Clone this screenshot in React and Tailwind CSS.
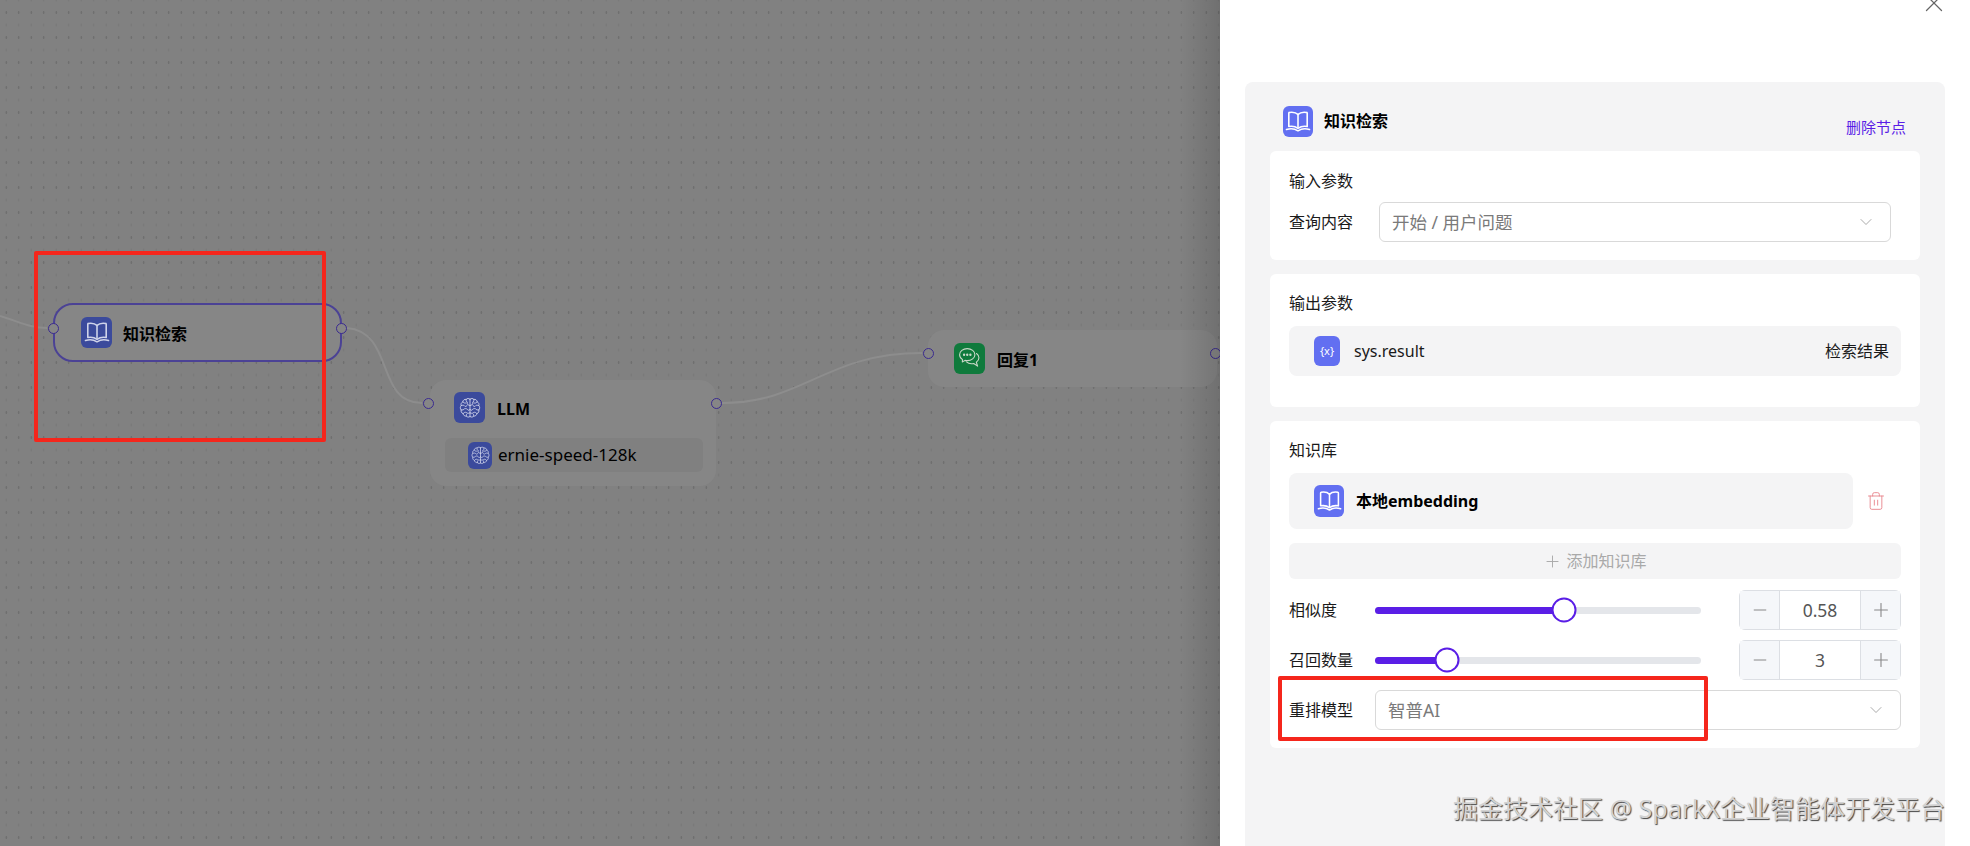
import React from "react";
import { ChevronDown, Minus, Plus, Trash2, X } from "lucide-react";

const BookIcon = ({ className }) => (
  <svg viewBox="0 0 30 30" fill="none" stroke="currentColor" strokeWidth="1.6" strokeLinejoin="round" strokeLinecap="round" className={className}>
    <path d="M15 7.5c-1.500-1.600-3.600-2.300-6.200-2.300-.9 0-1.700 0-2.400.2-.4.1-.6.4-.6.8v13.300c2.900-.5 6.300-.3 9.200 1.800 2.900-2.100 6.300-2.300 9.200-1.800V6.200c0-.4-.2-.7-.6-.8-.7-.2-1.500-.2-2.400-.2-2.600 0-4.700.7-6.200 2.300z" />
    <path d="M15 7.500v12.800" />
    <path d="M3.500 22.500c4-1.200 8.300-.8 11.500 1.300 3.200-2.100 7.500-2.500 11.500-1.300" />
  </svg>
);

const BrainIcon = ({ className }) => (
  <svg viewBox="0 0 24 24" fill="none" stroke="currentColor" strokeWidth="0.9" strokeLinecap="round" strokeLinejoin="round" className={className}>
    <path d="M12 3.200c-1-1-3-1-3.800.2-1.700-.4-3.300.8-3.300 2.500-1.500.5-2.300 2.200-1.700 3.700-1.200 1.100-1.200 3.200 0 4.300-.5 1.600.4 3.200 1.900 3.700.2 1.600 1.700 2.800 3.300 2.500.9 1.200 2.700 1.300 3.600.3 1 1 2.800.9 3.600-.3 1.600.3 3.100-.9 3.300-2.500 1.500-.5 2.400-2.100 1.900-3.700 1.200-1.100 1.200-3.200 0-4.300.6-1.500-.2-3.200-1.700-3.700 0-1.700-1.600-2.900-3.300-2.500-.8-1.200-2.800-1.200-3.800-.2z" />
    <path d="M12 3.200v17.400" />
    <path d="M8.200 3.400c-.5 1.300 0 2.500 1.300 3M4.900 5.900c.8 1.200 2 1.500 3.300 1M12 9.500c-1.500 0-2.500-.7-2.800-2M3.200 9.600c1.500-.8 3-.5 3.800.8 1 .1 1.900-.4 2.300-1.300M3.200 13.900c1.300.4 2.600 0 3.300-1.200 1.500-.4 3 .2 3.500 1.500 1 .2 1.600-.2 2-.9M5.100 17.600c.7-1.200 2-1.700 3.300-1.200M8.400 20.100c-.3-1.300.2-2.400 1.300-3 .8.300 1.600.2 2.300-.3" />
    <path d="M15.800 3.400c.5 1.300 0 2.500-1.300 3M19.100 5.900c-.8 1.200-2 1.500-3.300 1M12 9.500c1.500 0 2.500-.7 2.800-2M20.800 9.600c-1.500-.8-3-.5-3.800.8-1 .1-1.900-.4-2.300-1.300M20.800 13.900c-1.300.4-2.600 0-3.300-1.200-1.500-.4-3 .2-3.500 1.500-1 .2-1.600-.2-2-.9M18.900 17.600c-.7-1.200-2-1.700-3.300-1.200M15.600 20.100c.3-1.300-.2-2.400-1.300-3-.8.300-1.600.2-2.300-.3" />
  </svg>
);

const ChatIcon = ({ className }) => (
  <svg viewBox="0 0 30 30" fill="none" stroke="currentColor" strokeWidth="1.2" strokeLinecap="round" strokeLinejoin="round" className={className}>
    <path d="M12.500 4c-4.700 0-8.500 3-8.500 6.800 0 2.200 1.300 4.100 3.300 5.400l-.3 2.600 3-1.700c.8.200 1.600.3 2.500.3 4.700 0 8.500-3 8.500-6.600S17.200 4 12.500 4z" />
    <path d="M22.800 9.500c1.700 1.200 2.700 2.900 2.700 4.800 0 2-1.100 3.700-2.900 4.900l1.400 4.300-4.300-3c-3 .6-6.200-.1-8-1.800" />
    <circle cx="9" cy="10.800" r=".7" fill="currentColor" />
    <circle cx="12.500" cy="10.800" r=".7" fill="currentColor" />
    <circle cx="16" cy="10.800" r=".7" fill="currentColor" />
  </svg>
);

const Handle = ({ className }) => (
  <div className={"absolute w-[11px] h-[11px] rounded-full border-[1.5px] border-[#3a2a90] bg-[#868686] " + className}></div>
);

const NodeIcon = ({ bg, children, size = "w-[31px] h-[31px]" }) => (
  <div className={"flex items-center justify-center rounded-md shrink-0 " + bg + " " + size}>{children}</div>
);

const Canvas = () => (
  <div className="relative w-[1220px] h-[846px] overflow-hidden shrink-0 bg-[#818181] bg-[radial-gradient(#6a6a6a_0.8px,transparent_1px),radial-gradient(#787878_0.8px,transparent_1px)] bg-size-[12.5px_25px] bg-position-[0_0,0_12.5px]">
    <svg className="absolute inset-0" width="1220" height="846" fill="none" stroke="#8d8d8d" strokeWidth="2">
      <path d="M0 316C20 322 30 328 47 328" />
      <path d="M347 328C395 332 375 403 422 403" />
      <path d="M722 403C805 403 825 353 922 353" />
    </svg>

    {/* 知识检索 */}
    <div className="absolute left-[53px] top-[303px] w-[289px] h-[59px] flex items-center gap-[11px] pl-[26px] rounded-[20px] border-2 border-[#4b4295] bg-[#868686]">
      <NodeIcon bg="bg-[#3b4a9c]"><BookIcon className="w-[30px] h-[30px] text-[#cfd3ea]" /></NodeIcon>
      <span className="text-base font-bold text-black pt-[3px]">知识检索</span>
    </div>
    <Handle className="left-[48px] top-[323px]" />
    <Handle className="left-[336px] top-[323px]" />
    <div className="absolute left-[34px] top-[251px] w-[292px] h-[191px] rounded-[2px] border-4 border-[#f5261c]"></div>

    {/* LLM */}
    <div className="absolute left-[430px] top-[380px] w-[286px] h-[106px] rounded-[16px] bg-[#868686] pl-[15px] pr-[13px] pt-[12px]">
      <div className="flex items-center gap-3 pl-[9px]">
        <NodeIcon bg="bg-[#3b4a9c]"><BrainIcon className="w-[24px] h-[24px] text-[#cfd3ea]" /></NodeIcon>
        <span className="text-base font-bold text-black pt-[3px]">LLM</span>
      </div>
      <div className="mt-[15px] h-[34px] flex items-center gap-[6px] pl-[23px] bg-[#808080] rounded-md">
        <NodeIcon bg="bg-[#3b4a9c]" size="w-[24px] h-[27px]"><BrainIcon className="w-[21px] h-[21px] text-[#cfd3ea]" /></NodeIcon>
        <span className="text-[17px] text-black">ernie-speed-128k</span>
      </div>
    </div>
    <Handle className="left-[423px] top-[398px]" />
    <Handle className="left-[711px] top-[398px]" />

    {/* 回复1 */}
    <div className="absolute left-[928px] top-[330px] w-[289px] h-[57px] flex items-center gap-[12px] pl-[26px] rounded-[16px] bg-[#868686]">
      <NodeIcon bg="bg-[#0f7a3c]"><ChatIcon className="w-[27px] h-[27px] text-[#c9d8c8]" /></NodeIcon>
      <span className="text-base font-bold text-black pt-[3px]">回复1</span>
    </div>
    <Handle className="left-[923px] top-[348px]" />
    <Handle className="left-[1210px] top-[348px]" />

    <div className="absolute right-0 top-0 w-[40px] h-full bg-linear-to-r from-transparent to-[#00000022]"></div>
  </div>
);

const Section = ({ title, className, children }) => (
  <div className={"bg-white rounded-md px-[19px] " + className}>
    <div className="text-base leading-6 text-[#1a1a1a]">{title}</div>
    {children}
  </div>
);

const Select = ({ value, className }) => (
  <div className={"h-[40px] flex items-center justify-between pl-[12px] pr-[14px] border border-[#d9d9d9] rounded-md text-[#7a7a7a] text-[17.5px] " + className}>
    <span>{value}</span>
    <ChevronDown size={20} strokeWidth={1} className="text-[#9a9a9a]" />
  </div>
);

const SliderRow = ({ label, percent, value }) => (
  <div className="flex items-center h-[40px]">
    <span className="w-[86px] text-base text-[#1a1a1a] shrink-0">{label}</span>
    <div className="relative w-[326px] h-[7px] rounded-full bg-[#e4e6ea] shrink-0">
      <div className="h-full rounded-full bg-[#5a1ee6]" style={{ width: percent + "%" }}></div>
      <div
        className="absolute top-1/2 -translate-x-1/2 -translate-y-1/2 w-[25px] h-[25px] rounded-full bg-white border-2 border-[#5a1ee6]"
        style={{ left: percent + "%" }}
      ></div>
    </div>
    <div className="ml-auto w-[162px] h-[40px] flex items-stretch border border-[#dcdfe4] rounded-md text-[#555]">
      <div className="w-[40px] flex items-center justify-center bg-[#f5f7fa] border-r border-[#dcdfe4] text-[#888]">
        <Minus size={20} strokeWidth={1.2} />
      </div>
      <div className="flex-1 flex items-center justify-center text-[17.5px]">{value}</div>
      <div className="w-[40px] flex items-center justify-center bg-[#f5f7fa] border-l border-[#dcdfe4] text-[#888]">
        <Plus size={22} strokeWidth={1.2} />
      </div>
    </div>
  </div>
);

const Panel = () => (
  <div className="relative flex-1 h-[846px] bg-white overflow-hidden pt-[82px] pl-[25px] pr-[25px]">
    <X size={30} strokeWidth={1} className="absolute right-[21px] top-[-12px] text-[#666]" />

    <div className="h-[764px] bg-[#f4f4f5] rounded-t-lg px-[25px]">
      <div className="h-[69px] flex items-start pl-[13px] pr-[14px] pt-[24px]">
        <div className="w-[30px] h-[31px] rounded-md bg-[#626ff1] flex items-center justify-center">
          <BookIcon className="w-[30px] h-[30px] text-white" />
        </div>
        <span className="ml-[11px] text-base font-bold text-black leading-[31px]">知识检索</span>
        <span className="ml-auto mt-[10px] text-[15px] text-[#5a1ee6]">删除节点</span>
      </div>

      <Section title="输入参数" className="h-[109px] pt-[18px]">
        <div className="flex items-center mt-[9px]">
          <span className="w-[90px] text-base text-[#1a1a1a]">查询内容</span>
          <Select value="开始 / 用户问题" className="w-[512px]" />
        </div>
      </Section>

      <Section title="输出参数" className="h-[133px] mt-[14px] pt-[17px]">
        <div className="h-[50px] mt-[11px] flex items-center pl-[25px] pr-[12px] bg-[#f4f4f5] rounded-lg">
          <div className="w-[26px] h-[30px] rounded-md bg-[#626ff1] flex items-center justify-center text-white text-[11px]">
            {"{x}"}
          </div>
          <span className="ml-[14px] text-base text-[#1a1a1a]">sys.result</span>
          <span className="ml-auto text-base text-[#1a1a1a]">检索结果</span>
        </div>
      </Section>

      <Section title="知识库" className="h-[327px] mt-[14px] pt-[17px]">
        <div className="flex items-center mt-[11px]">
          <div className="w-[564px] h-[56px] flex items-center pl-[25px] bg-[#f4f4f5] rounded-lg">
            <div className="w-[30px] h-[32px] rounded-md bg-[#626ff1] flex items-center justify-center">
              <BookIcon className="w-[29px] h-[29px] text-white" />
            </div>
            <span className="ml-[12px] text-base font-bold text-black">本地embedding</span>
          </div>
          <Trash2 size={20} strokeWidth={1.1} className="ml-[13px] text-[#e8858c]" />
        </div>
        <div className="h-[36px] mt-[14px] flex items-center justify-center gap-1 bg-[#f4f4f5] rounded-md text-[#a9a9a9] text-base">
          <Plus size={19} strokeWidth={1.2} />
          添加知识库
        </div>
        <div className="mt-[11px] flex flex-col gap-[10px]">
          <SliderRow label="相似度" percent={58} value="0.58" />
          <SliderRow label="召回数量" percent={22} value="3" />
        </div>
        <div className="flex items-center mt-[10px]">
          <span className="w-[86px] text-base text-[#1a1a1a] shrink-0">重排模型</span>
          <Select value="智普AI" className="flex-1" />
        </div>
      </Section>
    </div>

    {/* 标注框和水印 */}
    <div className="absolute left-[58px] top-[676px] w-[430px] h-[65px] rounded-[2px] border-4 border-[#f5261c]"></div>
    <div className="absolute right-[25px] top-[790px] text-[25px] leading-9 text-[#d2d2d2] [text-shadow:1px_1px_1px_#444] whitespace-nowrap">
      掘金技术社区 @ SparkX企业智能体开发平台
    </div>
  </div>
);

export default function App() {
  return (
    <div className="flex w-[1970px] h-[846px] overflow-hidden font-['Noto_Sans','Noto_Sans_CJK_SC',sans-serif]">
      <Canvas />
      <Panel />
    </div>
  );
}
